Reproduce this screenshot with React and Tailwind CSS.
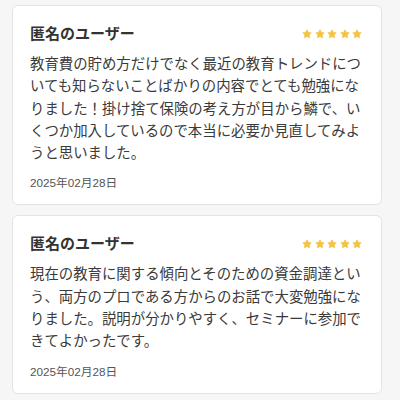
import { Star } from 'lucide-react';

const reviews = [
  {
    id: 1,
    name: '匿名のユーザー',
    rating: 5,
    body: '教育費の貯め方だけでなく最近の教育トレンドについても知らないことばかりの内容でとても勉強になりました！掛け捨て保険の考え方が目から鱗で、いくつか加入しているので本当に必要か見直してみようと思いました。',
    date: '2025年02月28日',
  },
  {
    id: 2,
    name: '匿名のユーザー',
    rating: 5,
    body: '現在の教育に関する傾向とそのための資金調達という、両方のプロである方からのお話で大変勉強になりました。説明が分かりやすく、セミナーに参加できてよかったです。',
    date: '2025年02月28日',
  },
];

function Stars({ count }) {
  return (
    <div className="flex items-center gap-[2.5px] mt-[2px]">
      {Array.from({ length: count }).map((_, i) => (
        <Star key={i} size={10} className="fill-[#f5c242] text-[#f5c242]" strokeWidth={1.5} />
      ))}
    </div>
  );
}

export default function App() {
  return (
    <div
      className="min-h-[400px] bg-[#f6f6f6] pt-[5px] pb-4"
      style={{ fontFamily: '"Noto Sans CJK JP", "Noto Sans", sans-serif' }}
    >
      <div className="ml-[12px] w-[370px] flex flex-col gap-[10px]">
        {reviews.map(r => (
          <div key={r.id} className="bg-white border border-[#e3e3e3] rounded-[6px] px-[17px] pt-[16px] pb-[12px]">
            <div className="flex items-center justify-between pr-[2px]">
              <h3 className="text-[15px] leading-[22px] font-bold text-[#333]">{r.name}</h3>
              <Stars count={r.rating} />
            </div>
            <p className="mt-[8px] text-[14.4px] leading-[22.3px] text-[#3a3a3a]">{r.body}</p>
            <p
              className="mt-[11px] text-[11.7px] leading-[18px] text-[#555]"
              style={{ fontFamily: '"Liberation Sans", "Noto Sans CJK JP", sans-serif' }}
            >
              {r.date}
            </p>
          </div>
        ))}
      </div>
    </div>
  );
}
